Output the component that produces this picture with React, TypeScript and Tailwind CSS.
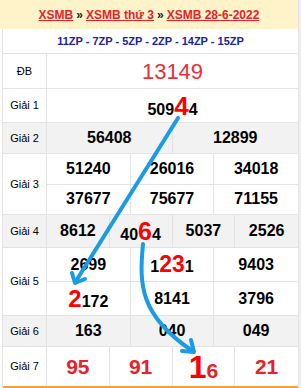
import React from 'react';

type RowProps = {
  label: string;
  gray?: boolean;
  className: string;
  children: React.ReactNode;
};

const Row: React.FC<RowProps> = ({ label, gray, className, children }) => (
  <div className={`flex border-b border-[#e3e3e3] ${gray ? 'bg-[#f2f2f2]' : 'bg-white'} ${className}`}>
    <div className="w-[44px] shrink-0 flex items-center justify-center border-r border-[#e3e3e3] text-[11px] text-black">
      {label}
    </div>
    <div className="flex-1 flex flex-col">{children}</div>
  </div>
);

// one line of prize numbers, split into equal columns
const Line: React.FC<{ cols: string; items: React.ReactNode[]; last?: boolean; big?: boolean }> = ({
  cols,
  items,
  last = true,
  big = false,
}) => (
  <div className={`flex-1 grid ${cols} divide-x divide-[#e3e3e3] ${last ? '' : 'border-b border-[#e3e3e3]'}`}>
    {items.map((it, i) => (
      <div
        key={i}
        className={`flex items-center justify-center font-bold ${big ? 'text-[21px] text-[#e8212a]' : 'text-[16px] text-black'}`}
      >
        <span className="leading-none">{it}</span>
      </div>
    ))}
  </div>
);

const Hi: React.FC<{ size: string; children: React.ReactNode }> = ({ size, children }) => (
  <span className={`text-[#ff0000] font-bold ${size}`}>{children}</span>
);

export default function App() {
  return (
    <div className="relative flex w-[301px] h-[388px] bg-white font-['Liberation_Sans',Arial,sans-serif] overflow-hidden">
      <div className="w-[298px] flex flex-col">
        {/* header */}
        <div className="h-[29px] bg-[#fff3c9] flex items-center justify-center text-[12px] font-bold text-[#222]">
          <span className="text-[#e8212a] underline">XSMB</span>
          <span className="mx-[3px]">»</span>
          <span className="text-[#e8212a] underline">XSMB thứ 3</span>
          <span className="mx-[3px]">»</span>
          <span className="text-[#e8212a] underline">XSMB 28-6-2022</span>
        </div>

        <div className="ml-[2px] border-l border-[#e3e3e3] flex flex-col flex-1">
          <div className="h-[25px] border-b border-[#e3e3e3] flex items-center justify-center text-[11px] font-bold text-[#1a1f9c]">
            11ZP - 7ZP - 5ZP - 2ZP - 14ZP - 15ZP
          </div>

          <Row label="ĐB" className="h-[35px]">
            <div className="flex-1 flex items-center justify-center text-[22px] text-[#e8303b]">13149</div>
          </Row>

          <Row label="Giải 1" className="h-[34px]">
            <Line
              cols="grid-cols-1"
              items={[
                <>
                  509<Hi size="text-[26px]">4</Hi>4
                </>,
              ]}
            />
          </Row>

          <Row label="Giải 2" gray className="h-[31px]">
            <Line cols="grid-cols-2" items={['56408', '12899']} />
          </Row>

          <Row label="Giải 3" className="h-[61px]">
            <Line cols="grid-cols-3" items={['51240', '26016', '34018']} last={false} />
            <Line cols="grid-cols-3" items={['37677', '75677', '71155']} />
          </Row>

          <Row label="Giải 4" gray className="h-[33px]">
            <Line
              cols="grid-cols-4"
              items={[
                '8612',
                <>
                  40<Hi size="text-[25px]">6</Hi>4
                </>,
                '5037',
                '2526',
              ]}
            />
          </Row>

          <Row label="Giải 5" className="h-[68px]">
            <Line
              cols="grid-cols-3"
              last={false}
              items={[
                '2699',
                <>
                  1<Hi size="text-[23px]">23</Hi>1
                </>,
                '9403',
              ]}
            />
            <Line
              cols="grid-cols-3"
              items={[
                <>
                  <Hi size="text-[24px]">2</Hi>172
                </>,
                '8141',
                '3796',
              ]}
            />
          </Row>

          <Row label="Giải 6" gray className="h-[31px]">
            <Line cols="grid-cols-3" items={['163', '040', '049']} />
          </Row>

          <Row label="Giải 7" className="flex-1 border-b-2 border-b-[#f4a13d]">
            <Line
              cols="grid-cols-4"
              big
              items={[
                '95',
                '91',
                <>
                  <Hi size="text-[32px]">1</Hi>6
                </>,
                '21',
              ]}
            />
          </Row>
        </div>
      </div>
      <div className="flex-1 bg-[#efefef] border-l border-[#e3e3e3]" />

      {/* hand-drawn arrows over the table */}
      <svg className="absolute left-0 top-0 pointer-events-none" width="301" height="388" viewBox="0 0 301 388">
        <g fill="none" stroke="#1b9be2" strokeWidth="4" strokeLinecap="round" strokeLinejoin="round">
          <path d="M178 118 L76 281" />
          <path d="M72 273 L75 283 L85 279" />
          <path d="M143 244 C139 285 140 315 191 350" />
          <path d="M191 340 L194 352 L182 351" />
        </g>
      </svg>
    </div>
  );
}
